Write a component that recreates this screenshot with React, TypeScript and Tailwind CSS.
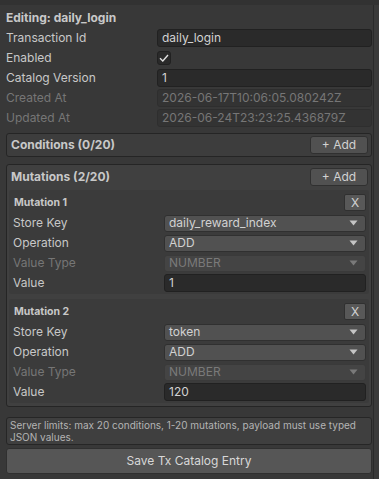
import React from "react";

const Caret = ({ dim }: { dim?: boolean }) => (
  <svg width="9" height="6" viewBox="0 0 9 6" className="shrink-0">
    <path d="M0.5 0.5 L8.5 0.5 L4.5 5.5 Z" fill={dim ? "#7a7a7a" : "#c4c4c4"} />
  </svg>
);

const TextRow = ({ label, value, disabled }: { label: string; value: string; disabled?: boolean }) => (
  <div className="grid grid-cols-[151px_1fr] h-[20px] items-center">
    <span className={disabled ? "text-[#767676]" : "text-[#c8c8c8]"}>{label}</span>
    <div
      className={
        "h-[18px] rounded-[3px] border px-[4px] flex items-center " +
        (disabled
          ? "bg-[#333333] border-[#2e2e2e] text-[#767676]"
          : "bg-[#2a2a2a] border-[#212121] text-[#d2d2d2]")
      }
    >
      {value}
    </div>
  </div>
);

const DropRow = ({ label, value, disabled }: { label: string; value: string; disabled?: boolean }) => (
  <div className="grid grid-cols-[151px_1fr] h-[20px] items-center">
    <span className={disabled ? "text-[#767676]" : "text-[#c8c8c8]"}>{label}</span>
    <div
      className={
        "h-[17px] rounded-[3px] border px-[4px] flex items-center justify-between " +
        (disabled
          ? "bg-[#444444] border-[#3a3a3a] text-[#7a7a7a]"
          : "bg-[#515151] border-[#303030] text-[#d2d2d2]")
      }
    >
      <span>{value}</span>
      <span className="pr-[3px]">
        <Caret dim={disabled} />
      </span>
    </div>
  </div>
);

const Mutation = ({ n, storeKey, value }: { n: number; storeKey: string; value: string }) => (
  <div className="bg-[#3b3b3b] rounded-[2px] pl-[4px] pr-[3px] pt-[4px] pb-[1px] flex flex-col">
    <div className="flex items-center justify-between h-[17px] mb-[2px]">
      <span className="font-bold text-[10.5px] text-[#c8c8c8] pl-[1px] pt-[1px]">Mutation {n}</span>
      <div className="w-[22px] h-[17px] bg-[#585858] border border-[#303030] rounded-[2px] flex items-center justify-center text-[#d2d2d2] text-[12px]">
        X
      </div>
    </div>
    <DropRow label="Store Key" value={storeKey} />
    <DropRow label="Operation" value="ADD" />
    <DropRow label="Value Type" value="NUMBER" disabled />
    <TextRow label="Value" value={value} />
  </div>
);

const AddBtn = () => (
  <div className="w-[58px] h-[18px] bg-[#515151] border border-[#303030] rounded-[3px] flex items-center justify-center text-[#d2d2d2] text-[12px]">
    + Add
  </div>
);

export default function App() {
  return (
    <div
      className="w-[379px] h-[479px] bg-[#383838] flex overflow-hidden text-[12px] leading-[16px] text-[#c8c8c8]"
      style={{ fontFamily: "Inter, 'Noto Sans', sans-serif" }}
    >
      <div className="w-[373px] flex flex-col pl-[6px] pr-[1px]">
        <div className="h-[5px] -ml-[6px] -mr-[1px] bg-[#323232]" />
        <div className="h-[20px] mt-[3px] flex items-center font-bold text-[#c8c8c8]">Editing: daily_login</div>
        <TextRow label="Transaction Id" value="daily_login" />
        <div className="grid grid-cols-[151px_1fr] h-[20px] items-center">
          <span>Enabled</span>
          <div className="w-[14px] h-[14px] bg-[#2a2a2a] border border-[#212121] rounded-[3px] flex items-center justify-center">
            <svg width="10" height="8" viewBox="0 0 10 8">
              <path d="M1 4.2 L3.8 7 L9 1" stroke="#e0e0e0" strokeWidth="1.4" fill="none" />
            </svg>
          </div>
        </div>
        <TextRow label="Catalog Version" value="1" />
        <TextRow label="Created At" value="2026-06-17T10:06:05.080242Z" disabled />
        <TextRow label="Updated At" value="2026-06-24T23:23:25.436879Z" disabled />

        <div className="mt-[5px] h-[24px] bg-[#3d3d3d] border border-[#252525] rounded-[3px] flex items-center justify-between pl-[4px] pr-[3px]">
          <span className="font-bold text-[12px]">Conditions (0/20)</span>
          <AddBtn />
        </div>

        <div className="mt-[7px] bg-[#404040] border border-[#252525] rounded-[3px] px-[2px] pt-[3px] pb-[3px] flex flex-col">
          <div className="flex items-center justify-between h-[18px] pl-[2px] pr-[1px] mb-[4px]">
            <span className="font-bold text-[12px]">Mutations (2/20)</span>
            <AddBtn />
          </div>
          <Mutation n={1} storeKey="daily_reward_index" value="1" />
          <div className="h-[5px]" />
          <Mutation n={2} storeKey="token" value="120" />
        </div>

        <div className="mt-[10px] h-[28px] bg-[#3f3f3f] border border-[#262626] rounded-[3px] px-[3px] pt-[1px] text-[10px] leading-[12px] text-[#b4b4b4]">
          Server limits: max 20 conditions, 1-20 mutations, payload must use typed JSON values.
        </div>

        <div className="mt-[3px] h-[26px] bg-[#565656] border border-[#303030] rounded-[3px] flex items-center justify-center text-[12px] text-[#d8d8d8]">
          Save Tx Catalog Entry
        </div>
      </div>
      <div className="w-[6px] flex flex-col">
        <div className="h-[5px] bg-[#323232]" />
        <div className="flex-1 border-l border-[#2a2a2a] bg-[#3a3a3a]" />
      </div>
    </div>
  );
}
